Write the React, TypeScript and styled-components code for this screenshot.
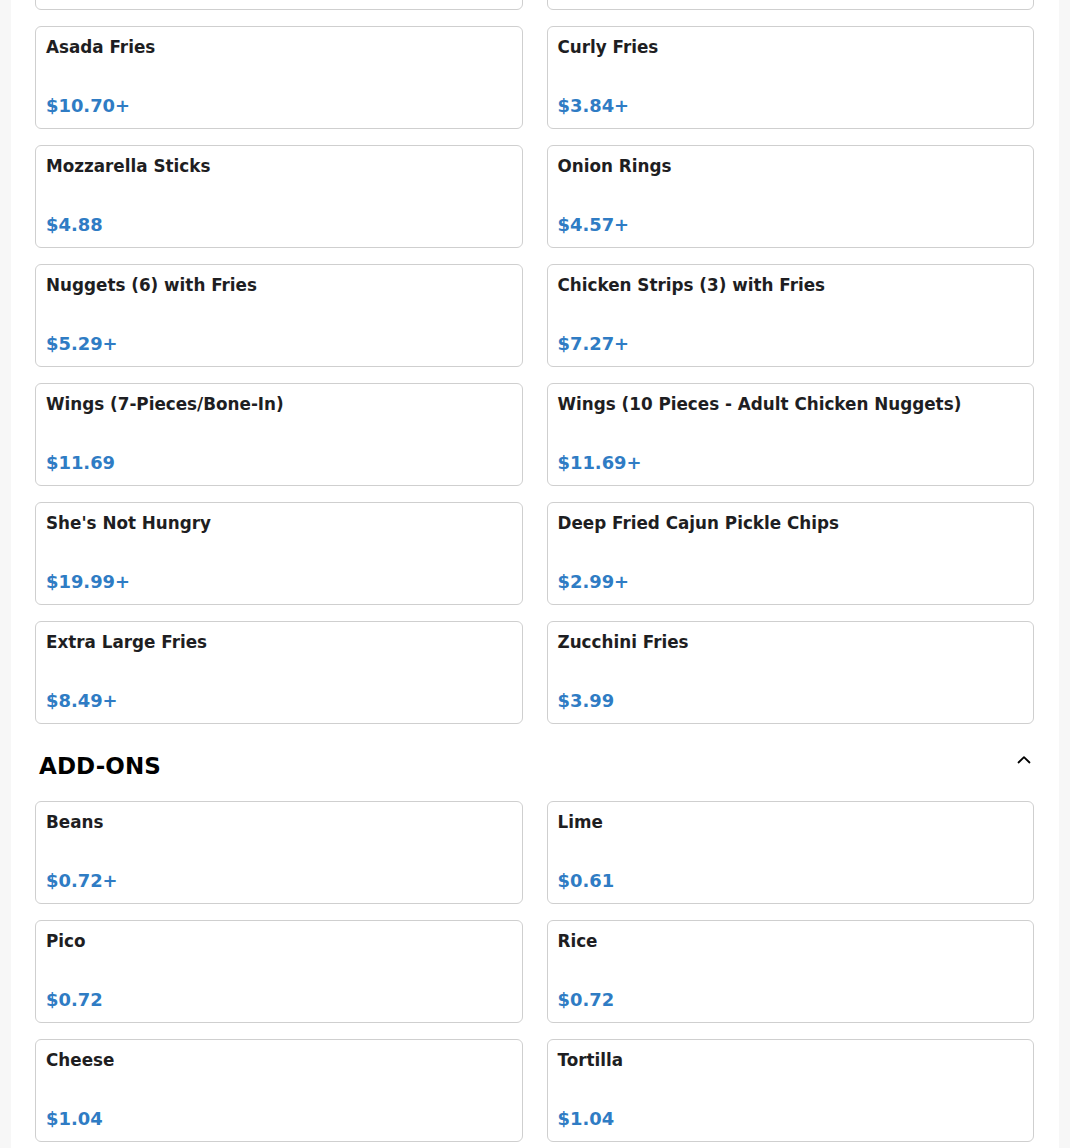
import React from "react";
import styled, { createGlobalStyle } from "styled-components";

const Global = createGlobalStyle`
  html, body { margin: 0; padding: 0; background: #f7f7f7; }
  body { font-family: "DejaVu Sans", "Liberation Sans", sans-serif; overflow: hidden; }
`;

const Panel = styled.main`
  max-width: 1048px;
  margin: -93px auto 0;
  background: #ffffff;
  padding: 0 25px 40px 24px;
  box-sizing: border-box;
  min-height: 1300px;
`;

const Section = styled.section`
  display: flex;
  flex-direction: column;
`;

const SectionHeader = styled.div`
  display: flex;
  align-items: center;
  justify-content: space-between;
  padding: 26px 2px 19px 4px;
`;

const SectionTitle = styled.h2`
  margin: 0;
  font-size: 23px;
  font-weight: 700;
  color: #000;
  letter-spacing: 0.1px;
  line-height: 32px;
`;

const Toggle = styled.button`
  border: none;
  background: none;
  padding: 0;
  width: 16px;
  height: 16px;
  display: flex;
  align-items: center;
  justify-content: center;
  margin-top: -12px;
  cursor: pointer;
`;

const Grid = styled.div`
  display: grid;
  grid-template-columns: 1fr 1fr;
  column-gap: 24px;
  row-gap: 16px;
`;

const Card = styled.div`
  border: 1px solid #cfcfcf;
  border-radius: 6px;
  height: 103px;
  box-sizing: border-box;
  padding: 10px 10px 11px;
  display: flex;
  flex-direction: column;
  justify-content: space-between;
  background: #fff;
`;

const ItemName = styled.div`
  font-size: 16.8px;
  font-weight: 700;
  color: #1e1e22;
  line-height: 21px;
`;

const Price = styled.div`
  font-size: 17.9px;
  font-weight: 700;
  color: #2f7cc4;
  line-height: 22px;
`;

type Item = { name: string; price: string };

const sides: Item[] = [
  { name: "French Fries", price: "$3.49+" },
  { name: "Chili Cheese Fries", price: "$6.99+" },
  { name: "Asada Fries", price: "$10.70+" },
  { name: "Curly Fries", price: "$3.84+" },
  { name: "Mozzarella Sticks", price: "$4.88" },
  { name: "Onion Rings", price: "$4.57+" },
  { name: "Nuggets (6) with Fries", price: "$5.29+" },
  { name: "Chicken Strips (3) with Fries", price: "$7.27+" },
  { name: "Wings (7-Pieces/Bone-In)", price: "$11.69" },
  { name: "Wings (10 Pieces - Adult Chicken Nuggets)", price: "$11.69+" },
  { name: "She's Not Hungry", price: "$19.99+" },
  { name: "Deep Fried Cajun Pickle Chips", price: "$2.99+" },
  { name: "Extra Large Fries", price: "$8.49+" },
  { name: "Zucchini Fries", price: "$3.99" },
];

const addons: Item[] = [
  { name: "Beans", price: "$0.72+" },
  { name: "Lime", price: "$0.61" },
  { name: "Pico", price: "$0.72" },
  { name: "Rice", price: "$0.72" },
  { name: "Cheese", price: "$1.04" },
  { name: "Tortilla", price: "$1.04" },
];

const ItemGrid = ({ items }: { items: Item[] }) => (
  <Grid>
    {items.map((it) => (
      <Card key={it.name}>
        <ItemName>{it.name}</ItemName>
        <Price>{it.price}</Price>
      </Card>
    ))}
  </Grid>
);

export default function App() {
  return (
    <>
      <Global />
      <Panel>
        <Section>
          <ItemGrid items={sides} />
        </Section>
        <Section>
          <SectionHeader>
            <SectionTitle>ADD-ONS</SectionTitle>
            <Toggle aria-label="Collapse">
              <svg width="14" height="10" viewBox="0 0 14 10" fill="none">
                <path d="M1.5 7.5 L7 2.2 L12.5 7.5" stroke="#000" strokeWidth="1.8" strokeLinecap="round" strokeLinejoin="round" />
              </svg>
            </Toggle>
          </SectionHeader>
          <ItemGrid items={addons} />
        </Section>
      </Panel>
    </>
  );
}
